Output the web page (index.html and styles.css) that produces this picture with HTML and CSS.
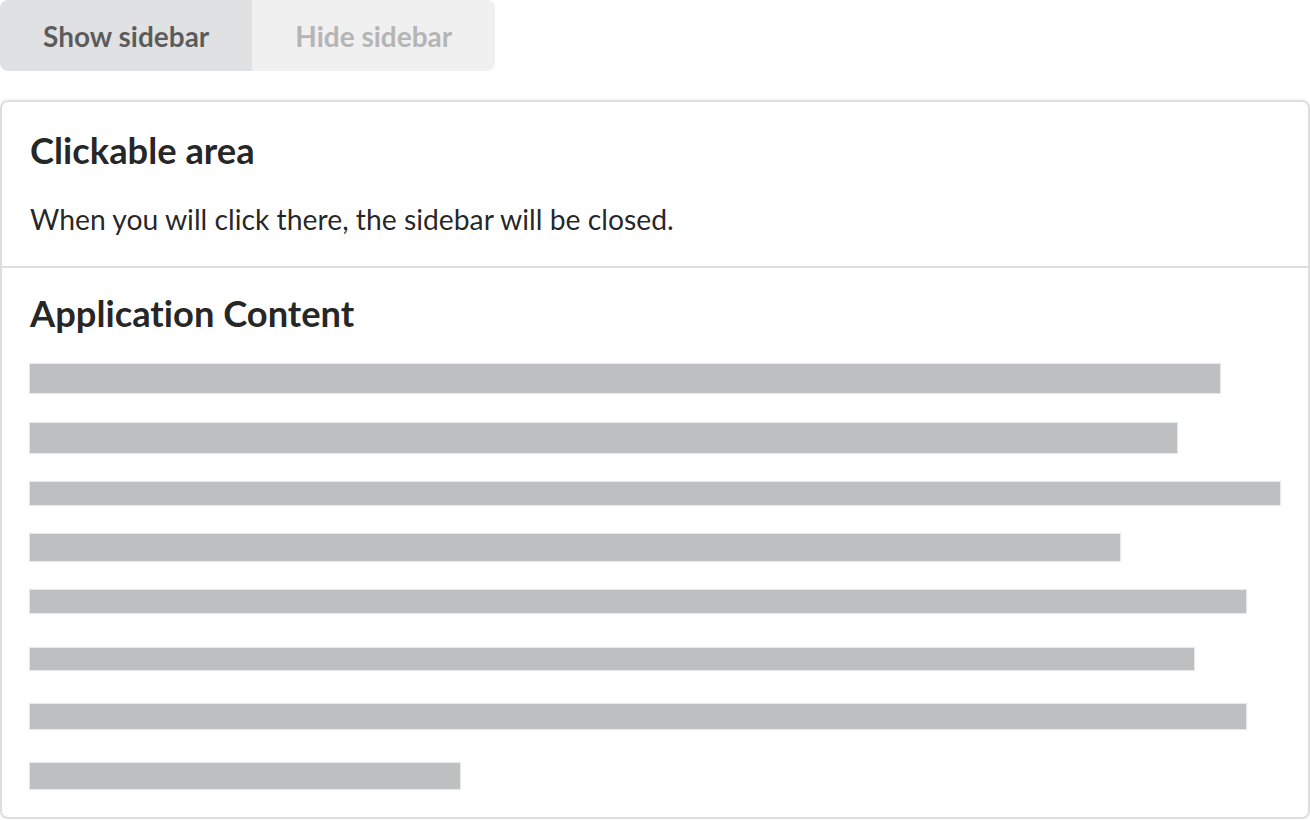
FILE: index.html
```html
<!DOCTYPE html>
<html lang="en">
<head>
    <meta charset="UTF-8">
    <meta name="viewport" content="width=device-width, initial-scale=1.0">
    <title>Sidebar Pushable</title>
    <link rel="stylesheet" href="styles.css">
</head>
<body>
    <div class="button-group">
        <button class="btn">Show sidebar</button>
        <button class="btn disabled" disabled>Hide sidebar</button>
    </div>

    <div class="pushable">
        <div class="segment clickable">
            <h3 class="header">Clickable area</h3>
            <p>When you will click there, the sidebar will be closed.</p>
        </div>
        <div class="segment content">
            <h3 class="header">Application Content</h3>
            <div class="paragraph">
                <div class="line" style="width: 1190px; height: 29px; margin-top: 0;"></div>
                <div class="line" style="width: 1147px; height: 30px; margin-top: 30px;"></div>
                <div class="line" style="width: 1250px; height: 23px; margin-top: 29px;"></div>
                <div class="line" style="width: 1090px; height: 27px; margin-top: 29px;"></div>
                <div class="line" style="width: 1216px; height: 23px; margin-top: 29px;"></div>
                <div class="line" style="width: 1164px; height: 22px; margin-top: 35px;"></div>
                <div class="line" style="width: 1216px; height: 25px; margin-top: 34px;"></div>
                <div class="line" style="width: 430px; height: 26px; margin-top: 34px;"></div>
            </div>
        </div>
    </div>
</body>
</html>
```

FILE: styles.css
```css
body {
    margin: 0;
    font-family: Lato, "Open Sans", Arial, sans-serif;
    font-size: 28px;
    line-height: 1.4285em;
    color: rgba(0, 0, 0, 0.87);
    background: #fff;
    font-variant-ligatures: none;
}

.button-group {
    display: inline-flex;
    border-radius: 8px;
    overflow: hidden;
}

.btn {
    font-family: inherit;
    font-size: 28px;
    font-weight: 700;
    line-height: 1em;
    height: 71px;
    padding: 0 43px;
    border: none;
    margin: 0;
    white-space: nowrap;
    background-color: #e0e1e2;
    color: rgba(0, 0, 0, 0.6);
    cursor: pointer;
    font-variant-ligatures: none;
}

.btn.disabled {
    background-color: #f0f0f1;
    color: #b5b5b5;
    cursor: default;
}

.pushable {
    margin-top: 29px;
    border: 2px solid #dededf;
    border-radius: 8px;
    box-shadow: 0 0 4px rgba(34, 36, 38, 0.08);
    overflow: hidden;
}

.segment {
    padding: 28px;
}

.clickable {
    border-bottom: 2px solid #dededf;
    padding-bottom: 27px;
}

.header {
    font-size: 36.3px;
    font-weight: 700;
    line-height: 1.2857em;
    margin: -3px 0 25px;
}

.content .header {
    margin: -6px 0 28px;
}

p {
    margin: 0;
    font-size: 28.3px;
}

.paragraph {
    display: flex;
    flex-direction: column;
}

.line {
    background-color: #bebfc1;
    box-shadow: 0 0 1px 1px rgba(190, 191, 193, 0.35);
}
```
